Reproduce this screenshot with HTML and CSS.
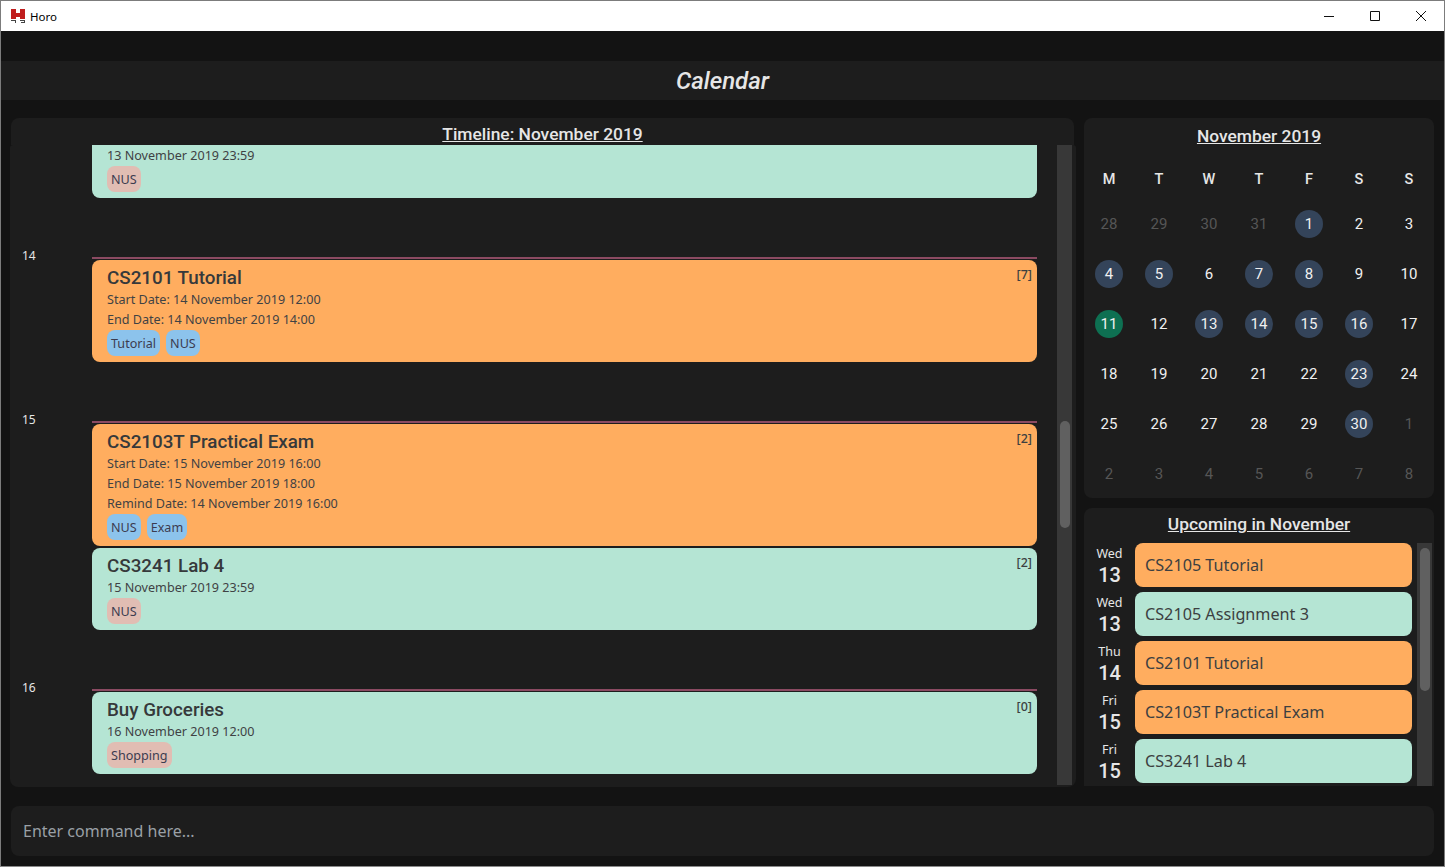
FILE: index.html
```html
<!DOCTYPE html>
<html lang="en">
<head>
<meta charset="utf-8">
<title>Horo</title>
<link rel="stylesheet" href="styles.css">
</head>
<body>
<div class="window">
  <div class="titlebar">
    <svg class="logo" viewBox="0 0 16 16" width="16" height="16" shape-rendering="crispEdges"><path fill="#c01e1e" d="M1 1h5v4h4V1h5v10h-5V9H6v2H1z"/><path fill="#444" d="M1 12h5v3H5v-2H1zM10 12h5v3h-4v-1h3v-1h-4z"/></svg>
    <span class="app-name">Horo</span>
    <div class="win-controls">
      <svg viewBox="0 0 46 30" width="46" height="30"><path d="M18 15.5h10" stroke="#111" fill="none"/></svg>
      <svg viewBox="0 0 46 30" width="46" height="30"><path d="M18.5 10.5h9v9h-9z" stroke="#111" fill="none"/></svg>
      <svg viewBox="0 0 46 30" width="46" height="30"><path d="M18 10l10 10M28 10L18 20" stroke="#111" fill="none"/></svg>
    </div>
  </div>
  <div class="menubar"></div>
  <header class="pagehead">Calendar</header>
  <main class="content">
    <section class="timeline">
      <h2 class="panel-title tl-title">Timeline: November 2019</h2>
      <div class="tl-body">
        <div class="tl-list">
          <div class="tl-day">
            <div class="day-label"></div>
            <div class="day-events">
              <article class="card mint clipped">
                <p class="meta">13 November 2019 23:59</p>
                <div class="tags"><span class="tag pink">NUS</span></div>
              </article>
            </div>
          </div>
          <div class="tl-day">
            <div class="day-label">14</div>
            <div class="day-events lined">
              <article class="card orange">
                <span class="count">[7]</span>
                <h3 class="card-title">CS2101 Tutorial</h3>
                <p class="meta">Start Date: 14 November 2019 12:00</p>
                <p class="meta">End Date: 14 November 2019 14:00</p>
                <div class="tags"><span class="tag blue">Tutorial</span><span class="tag blue">NUS</span></div>
              </article>
            </div>
          </div>
          <div class="tl-day">
            <div class="day-label">15</div>
            <div class="day-events lined">
              <article class="card orange">
                <span class="count">[2]</span>
                <h3 class="card-title">CS2103T Practical Exam</h3>
                <p class="meta">Start Date: 15 November 2019 16:00</p>
                <p class="meta">End Date: 15 November 2019 18:00</p>
                <p class="meta">Remind Date: 14 November 2019 16:00</p>
                <div class="tags"><span class="tag blue">NUS</span><span class="tag blue">Exam</span></div>
              </article>
              <article class="card mint">
                <span class="count">[2]</span>
                <h3 class="card-title">CS3241 Lab 4</h3>
                <p class="meta">15 November 2019 23:59</p>
                <div class="tags"><span class="tag pink">NUS</span></div>
              </article>
            </div>
          </div>
          <div class="tl-day">
            <div class="day-label">16</div>
            <div class="day-events lined">
              <article class="card mint">
                <span class="count">[0]</span>
                <h3 class="card-title">Buy Groceries</h3>
                <p class="meta">16 November 2019 12:00</p>
                <div class="tags"><span class="tag pink">Shopping</span></div>
              </article>
            </div>
          </div>
        </div>
        <div class="track tl-track"><div class="thumb tl-thumb"></div></div>
      </div>
    </section>
    <aside class="side">
      <section class="calendar panel">
        <h2 class="panel-title cal-title">November 2019</h2>
        <div class="cal-grid">
          <div class="dow">M</div><div class="dow">T</div><div class="dow">W</div><div class="dow">T</div><div class="dow">F</div><div class="dow">S</div><div class="dow">S</div>
          <div class="d out"><span>28</span></div><div class="d out"><span>29</span></div><div class="d out"><span>30</span></div><div class="d out"><span>31</span></div><div class="d ev"><span>1</span></div><div class="d"><span>2</span></div><div class="d"><span>3</span></div>
          <div class="d ev"><span>4</span></div><div class="d ev"><span>5</span></div><div class="d"><span>6</span></div><div class="d ev"><span>7</span></div><div class="d ev"><span>8</span></div><div class="d"><span>9</span></div><div class="d"><span>10</span></div>
          <div class="d today"><span>11</span></div><div class="d"><span>12</span></div><div class="d ev"><span>13</span></div><div class="d ev"><span>14</span></div><div class="d ev"><span>15</span></div><div class="d ev"><span>16</span></div><div class="d"><span>17</span></div>
          <div class="d"><span>18</span></div><div class="d"><span>19</span></div><div class="d"><span>20</span></div><div class="d"><span>21</span></div><div class="d"><span>22</span></div><div class="d ev"><span>23</span></div><div class="d"><span>24</span></div>
          <div class="d"><span>25</span></div><div class="d"><span>26</span></div><div class="d"><span>27</span></div><div class="d"><span>28</span></div><div class="d"><span>29</span></div><div class="d ev"><span>30</span></div><div class="d out"><span>1</span></div>
          <div class="d out"><span>2</span></div><div class="d out"><span>3</span></div><div class="d out"><span>4</span></div><div class="d out"><span>5</span></div><div class="d out"><span>6</span></div><div class="d out"><span>7</span></div><div class="d out"><span>8</span></div>
        </div>
      </section>
      <section class="upcoming panel">
        <h2 class="panel-title up-title">Upcoming in November</h2>
        <div class="up-body">
          <div class="up-list">
            <div class="up-row"><div class="up-date"><span class="up-dow">Wed</span><span class="up-num">13</span></div><div class="up-card orange">CS2105 Tutorial</div></div>
            <div class="up-row"><div class="up-date"><span class="up-dow">Wed</span><span class="up-num">13</span></div><div class="up-card mint">CS2105 Assignment 3</div></div>
            <div class="up-row"><div class="up-date"><span class="up-dow">Thu</span><span class="up-num">14</span></div><div class="up-card orange">CS2101 Tutorial</div></div>
            <div class="up-row"><div class="up-date"><span class="up-dow">Fri</span><span class="up-num">15</span></div><div class="up-card orange">CS2103T Practical Exam</div></div>
            <div class="up-row"><div class="up-date"><span class="up-dow">Fri</span><span class="up-num">15</span></div><div class="up-card mint">CS3241 Lab 4</div></div>
          </div>
          <div class="track up-track"><div class="thumb up-thumb"></div></div>
        </div>
      </section>
    </aside>
  </main>
  <footer class="command"><span class="placeholder">Enter command here...</span></footer>
</div>
</body>
</html>
```
FILE: styles.css
```css
* { box-sizing: border-box; }
html, body { margin: 0; padding: 0; height: 100%; background: #131313; overflow: hidden; }
body { font-family: "Noto Sans", sans-serif; }
h2, h3, p { margin: 0; }

.window { width: 1445px; height: 867px; border: 1px solid #7c7c7c; border-bottom-color: #8a8a8a; display: flex; flex-direction: column; background: #131313; }

.titlebar { height: 30px; flex: none; background: #fff; display: flex; align-items: center; padding-left: 9px; }
.logo { flex: none; margin-right: 4px; }
.app-name { font-family: "Noto Sans", sans-serif; font-size: 11.5px; color: #000; }
.win-controls { margin-left: auto; display: flex; }

.menubar { height: 30px; flex: none; background: #131313; }
.pagehead { height: 39px; flex: none; background: #1d1d1d; color: #e6e6e6; font-family: Roboto, sans-serif; font-style: italic; font-weight: 500; font-size: 24px; line-height: 41px; text-align: center; }

.content { flex: none; height: 669px; margin-top: 18px; padding: 0 10px 0 9px; display: flex; gap: 8px; }
.panel { background: #1d1d1d; border-radius: 8px; }
.panel-title { font-family: Roboto, sans-serif; font-size: 17.4px; font-weight: 500; color: #e6e6e6; text-decoration: underline; text-align: center; }

.timeline { width: 1066px; flex: none; display: flex; flex-direction: column; }
.tl-title { height: 27px; line-height: 33px; margin: 0 2px 0 1px; background: #1d1d1d; border-radius: 8px 8px 0 0; }
.tl-body { height: 642px; display: flex; padding: 0 4px 2px 0; overflow: hidden; background: #1d1d1d; border-radius: 3px 3px 8px 8px; }
.tl-list { flex: 1; min-width: 0; display: flex; flex-direction: column; gap: 59px; }
.tl-day { display: flex; }
.day-label { width: 82px; flex: none; padding-left: 12px; margin-top: -9px; font-size: 12px; line-height: 16px; color: #e6e6e6; }
.day-events { width: 945px; flex: none; display: flex; flex-direction: column; gap: 2px; }
.lined { border-top: 2px solid #8b4a62; padding-top: 1px; }

.card { position: relative; border-radius: 8px; padding: 6px 15px; color: #3c3f41; }
.clipped { border-radius: 0 0 8px 8px; padding-top: 0; height: 53px; }
.orange { background: #ffad5f; }
.mint { background: #b5e5d4; }
.card-title { font-family: Roboto, sans-serif; font-weight: 500; font-size: 18.8px; line-height: 24px; margin-bottom: -1px; color: #36393b; }
.meta { font-size: 12.6px; line-height: 22px; margin-bottom: -2px; color: #3f4244; }
.count { position: absolute; right: 5px; top: 7px; font-size: 12.5px; line-height: 16px; font-weight: 500; }
.tags { display: flex; gap: 6px; margin-top: 1px; }
.tag { height: 26px; padding: 0 4px; border-radius: 8px; font-size: 12.6px; line-height: 28px; color: #3c3c50; }
.blue { background: #8cc3ec; }
.pink { background: #e1bdb3; }

.track { flex: none; background: #383838; }
.thumb { background: #606060; border-radius: 5px; width: 10px; }
.tl-track { width: 15px; padding-left: 3px; }
.tl-thumb { height: 107px; margin-top: 276px; }

.side { width: 350px; flex: none; display: flex; flex-direction: column; gap: 10px; }
.calendar { height: 380px; flex: none; }
.cal-title { height: 41px; line-height: 37px; }
.cal-grid { display: grid; grid-template-columns: repeat(7, 50px); grid-template-rows: 40px; grid-auto-rows: 50px; }
.dow { font-family: Roboto, sans-serif; font-size: 14.5px; font-weight: 500; color: #e6e6e6; text-align: center; line-height: 42px; }
.d { display: flex; align-items: center; justify-content: center; font-family: Roboto, sans-serif; font-size: 15px; font-weight: 400; color: #f0f0f0; }
.d span { width: 28px; height: 28px; border-radius: 50%; line-height: 28px; text-align: center; }
.out { color: #565656; }
.ev span { background: #34445a; }
.today span { background: #0e7052; }

.upcoming { height: 278px; flex: none; border-radius: 8px 8px 0 0; display: flex; flex-direction: column; }
.up-title { height: 35px; line-height: 33px; }
.up-body { flex: 1; min-height: 0; display: flex; padding-right: 2px; overflow: hidden; }
.up-list { flex: 1; min-width: 0; display: flex; flex-direction: column; gap: 5px; padding-right: 5px; }
.up-row { display: flex; flex: none; height: 44px; }
.up-date { width: 51px; flex: none; display: flex; flex-direction: column; align-items: center; padding-top: 1px; color: #e6e6e6; }
.up-dow { font-size: 12.5px; line-height: 20px; }
.up-num { font-family: Roboto, sans-serif; font-weight: 500; font-size: 20px; line-height: 24px; margin-top: -1px; }
.up-card { flex: 1; min-width: 0; border-radius: 8px; padding-left: 10px; font-size: 16.2px; line-height: 44px; color: #3c3f41; }
.up-track { width: 15px; padding: 5px 0 0 3px; }
.up-thumb { height: 143px; }

.command { height: 50px; flex: none; margin: 19px 10px 0 10px; background: #1d1d1d; border-radius: 8px; padding-left: 12px; line-height: 50px; font-size: 16px; }
.placeholder { color: #9aa0a6; }
```
